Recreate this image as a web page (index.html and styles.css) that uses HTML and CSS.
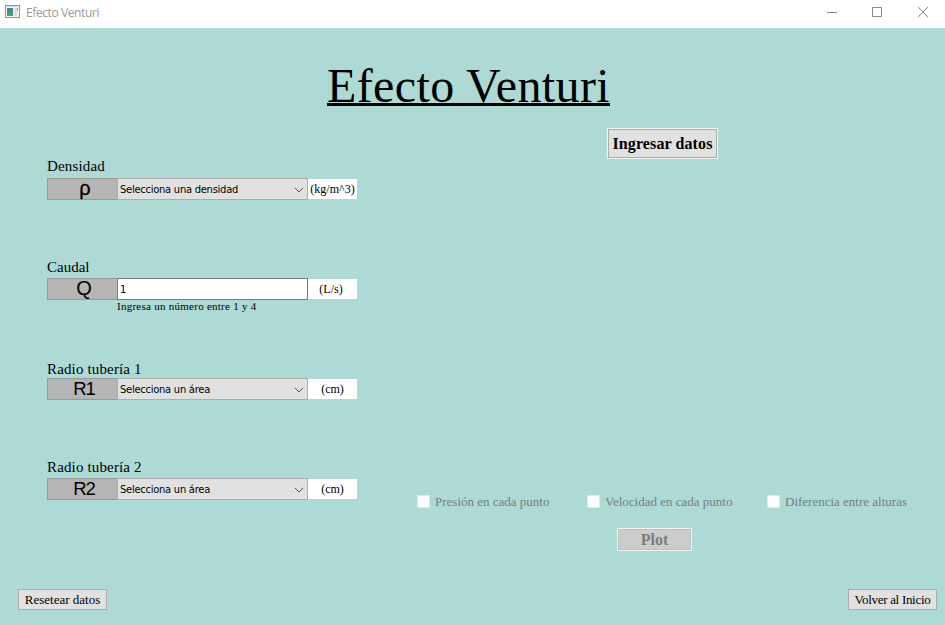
FILE: index.html
```html
<!DOCTYPE html>
<html lang="es">
<head>
<meta charset="utf-8">
<title>Efecto Venturi</title>
<link rel="stylesheet" href="styles.css">
</head>
<body>
<header class="titlebar">
  <svg class="app-icon" width="16" height="14" viewBox="0 0 16 14"><defs><linearGradient id="g" x2="0" y2="1"><stop stop-color="#3f7f9c"/><stop offset="1" stop-color="#4fa277"/></linearGradient></defs><rect x=".5" y=".5" width="14" height="12" fill="#f5f5f5" stroke="#929899"/><path d="M1 1.5h13" stroke="#d5dadb"/><rect x="2" y="3" width="6" height="8" fill="url(#g)"/><path d="M9 3h3v8H9z" fill="#dedede"/><path d="M12.5 3v3" stroke="#a5a5a5"/></svg>
  <span class="caption">Efecto Venturi</span>
  <svg class="controls" width="104" height="12" viewBox="0 0 104 12" fill="none" stroke="#888"><path d="M0 6.5h10M45.500 1.500h9v9h-9z"/><path d="M91 1l10 10M101 1L91 11"/></svg>
</header>
<main>
  <h1>Efecto Venturi</h1>
  <div class="content">
    <form class="fields">
      <div class="field"><label class="name density">Densidad</label>
        <div class="row"><span class="symbol rho">ρ</span><span class="select"><span class="choice">Selecciona una densidad</span><svg width="10" height="6" viewBox="0 0 10 6"><path d="M.8 .8L5 5 9.200 .8"/></svg></span><span class="unit">(kg/m^3)</span></div></div>
      <div class="field"><label class="name">Caudal</label>
        <div class="row"><span class="symbol flow">Q</span><span class="input">1</span><span class="unit flow-unit">(L/s)</span></div>
        <small class="hint">Ingresa un número entre 1 y 4</small></div>
      <div class="field"><label class="name radius-one">Radio tubería 1</label>
        <div class="row"><span class="symbol">R1</span><span class="select"><span class="choice">Selecciona un área</span><svg width="10" height="6" viewBox="0 0 10 6"><path d="M.8 .8L5 5 9.200 .8"/></svg></span><span class="unit">(cm)</span></div></div>
      <div class="field"><label class="name radius-two">Radio tubería 2</label>
        <div class="row"><span class="symbol">R2</span><span class="select"><span class="choice">Selecciona un área</span><svg width="10" height="6" viewBox="0 0 10 6"><path d="M.8 .8L5 5 9.200 .8"/></svg></span><span class="unit">(cm)</span></div></div>
    </form>
    <section class="output">
      <button class="enter">Ingresar datos</button>
      <div class="checks">
        <label class="check"><i></i><span>Presión en cada punto</span></label>
        <label class="check"><i></i><span>Velocidad en cada punto</span></label>
        <label class="check"><i></i><span>Diferencia entre alturas</span></label>
      </div>
      <button class="plot">Plot</button>
    </section>
  </div>
  <footer><button class="small">Resetear datos</button><button class="small back">Volver al Inicio</button></footer>
</main>
</body>
</html>
```
FILE: styles.css
```css
* { box-sizing: border-box; }
body { margin: 0; width: 945px; height: 625px; overflow: hidden; background: #addad5; color: #000; font-family: "Liberation Serif", serif; }
.titlebar { display: flex; height: 28px; padding: 5px 14px 0 5px; background: #fff; }
.caption { margin-left: 5px; color: #999; font: 12px/16px "Open Sans", sans-serif; letter-spacing: -.4px; }
.controls { margin: 1px 0 0 auto; }
main { height: 597px; }
h1 { width: fit-content; height: 100px; margin: 0 0 0 327px; padding-top: 30px; font-size: 48px; font-weight: 400; line-height: 56px; letter-spacing: .38px; white-space: nowrap; text-decoration: underline; text-decoration-thickness: 3px; text-underline-offset: 1px; text-decoration-skip-ink: none; }
.content { display: flex; height: 461px; }
.fields { width: 370px; margin: 22px 0 0 47px; }
.field { height: 100px; }
.name { display: block; height: 28px; padding-top: 8px; font-size: 15px; line-height: 18px; white-space: nowrap; }
.density { padding-top: 7px; letter-spacing: .15px; }
.radius-one, .radius-two { letter-spacing: .15px; }
.radius-one { padding-top: 10px; }
.row { display: flex; align-items: center; height: 22px; }
.symbol { width: 70px; height: 22px; padding-left: 3px; border: 1px solid #999; border-right: 0; background: #b5b5b5; font: 18.5px/19px "Liberation Sans", sans-serif; letter-spacing: -1px; text-align: center; }
.flow { font-size: 20px; line-height: 18px; letter-spacing: 0; }
.rho { padding-left: 5px; font-size: 20px; line-height: 18px; letter-spacing: 0; -webkit-text-stroke: .3px #000; }
.select, .input { display: flex; align-items: center; justify-content: space-between; width: 191px; height: 22px; padding: 1px 3px 0 2px; border: 1px solid #adadad; background: #e1e1e1; font: 11px/18px "DejaVu Sans Condensed", "DejaVu Sans", sans-serif; letter-spacing: -.23px; white-space: nowrap; }
.select svg { fill: none; stroke: #555; }
.input { border-color: #7a7a7a; background: #fff; }
.unit { width: 49px; height: 20px; background: #fff; font-size: 12px; line-height: 20px; text-align: center; }
.flow-unit { padding-right: 3px; }
.hint { display: block; margin-left: 70px; font-size: 11px; line-height: 13px; letter-spacing: .26px; white-space: nowrap; }
.output { display: flex; flex-direction: column; width: 528px; }
button { display: flex; align-items: center; justify-content: center; padding: 0; border: 1px solid #adadad; border-radius: 0; background: #e1e1e1; color: #000; font-family: inherit; white-space: nowrap; }
.enter { width: 109px; height: 29px; margin: 1px 0 0 191px; outline: 1px solid #f0f4f3; font-size: 16px; font-weight: 700; letter-spacing: .1px; }
.checks { display: flex; height: 13px; margin-top: 337px; }
.check { display: flex; align-items: center; width: 170px; color: #74807e; font-size: 13px; line-height: 13px; white-space: nowrap; }
.check:nth-child(2) { width: 180px; }
.check i { width: 13px; height: 13px; margin-right: 5px; background: #fff; border: 1px solid #e5e5e5; }
.plot { width: 73px; height: 21px; margin: 21px 0 0 201px; border-color: #bfbfbf; outline: 1px solid #f0f4f3; background: #ccc; color: #7c7c7c; font-size: 16px; font-weight: 700; }
footer { display: flex; justify-content: space-between; padding: 0 8px 0 18px; }
.small { width: 89px; height: 21px; font-size: 13px; }
.back { letter-spacing: -.3px; }
```
